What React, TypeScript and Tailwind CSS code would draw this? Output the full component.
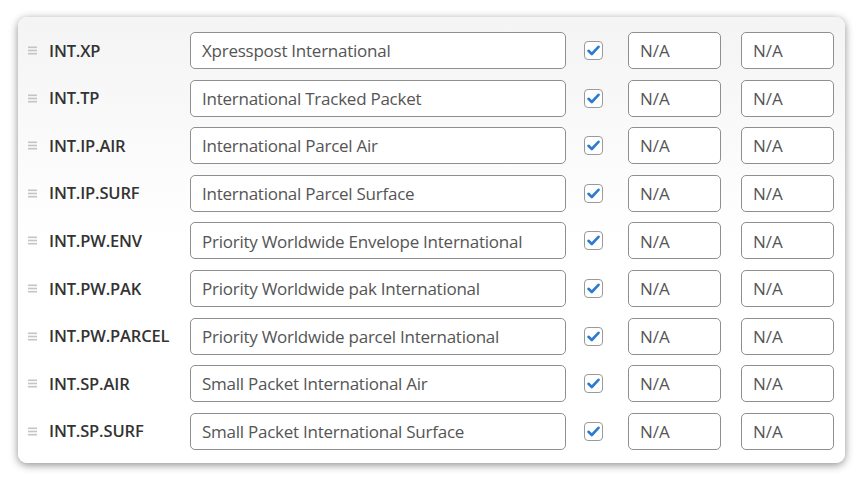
const rows = [
  { code: 'INT.XP', name: 'Xpresspost International' },
  { code: 'INT.TP', name: 'International Tracked Packet' },
  { code: 'INT.IP.AIR', name: 'International Parcel Air' },
  { code: 'INT.IP.SURF', name: 'International Parcel Surface' },
  { code: 'INT.PW.ENV', name: 'Priority Worldwide Envelope International' },
  { code: 'INT.PW.PAK', name: 'Priority Worldwide pak International' },
  { code: 'INT.PW.PARCEL', name: 'Priority Worldwide parcel International' },
  { code: 'INT.SP.AIR', name: 'Small Packet International Air' },
  { code: 'INT.SP.SURF', name: 'Small Packet International Surface' },
];

// Little three-line drag handle
const Handle = () => (
  <svg width="9" height="9" viewBox="0 0 9 9" className="shrink-0">
    <rect x="0" y="0.5" width="9" height="1.6" fill="#c4c4c4" />
    <rect x="0" y="3.7" width="9" height="1.6" fill="#c4c4c4" />
    <rect x="0" y="6.9" width="9" height="1.6" fill="#c4c4c4" />
  </svg>
);

const CheckBox = () => (
  <div className="w-[19px] h-[19px] rounded-[4px] border border-[#9a9a9a] bg-white flex items-center justify-center shrink-0">
    <svg width="13" height="11" viewBox="0 0 13 11">
      <path d="M1.5 5.8 L4.8 9 L11.5 1.8" fill="none" stroke="#2b7bd0" strokeWidth="2.6" strokeLinecap="round" strokeLinejoin="round" />
    </svg>
  </div>
);

export default function App() {
  return (
    <div
      className="w-[863px] h-[482px] bg-white pt-[17px] pl-[18px]"
      style={{ fontFamily: '"Open Sans", "Noto Sans", sans-serif' }}
    >
      <div className="w-[827px] h-[446px] rounded-[9px] bg-gradient-to-b from-[#f4f4f4] via-white to-white shadow-[0_2px_8px_rgba(0,0,0,0.45)] pt-[15px] flex flex-col gap-[10.6px]">
        {rows.map(r => (
          <div key={r.code} className="flex items-center h-[37px]">
            <div className="w-[31px] pl-[10px] flex items-center">
              <Handle />
            </div>
            <div className="w-[141px] text-[16.5px] font-semibold text-[#333] tracking-[-0.15px] pt-[1px]">{r.code}</div>
            <div className="w-[376px] h-[37px] rounded-[5px] border border-[#8f8f8f] bg-white px-[11px] flex items-center text-[17px] text-[#555] tracking-[-0.25px] pt-[1px]">
              {r.name}
            </div>
            <div className="w-[54px] flex justify-center pl-[1px]">
              <CheckBox />
            </div>
            <div className="w-[8px]" />
            <div className="w-[93px] h-[37px] rounded-[5px] border border-[#8f8f8f] bg-white px-[11px] flex items-center text-[17px] text-[#555] pt-[1px]">
              N/A
            </div>
            <div className="w-[20px]" />
            <div className="w-[93px] h-[37px] rounded-[5px] border border-[#8f8f8f] bg-white px-[11px] flex items-center text-[17px] text-[#555] pt-[1px]">
              N/A
            </div>
          </div>
        ))}
      </div>
    </div>
  );
}
